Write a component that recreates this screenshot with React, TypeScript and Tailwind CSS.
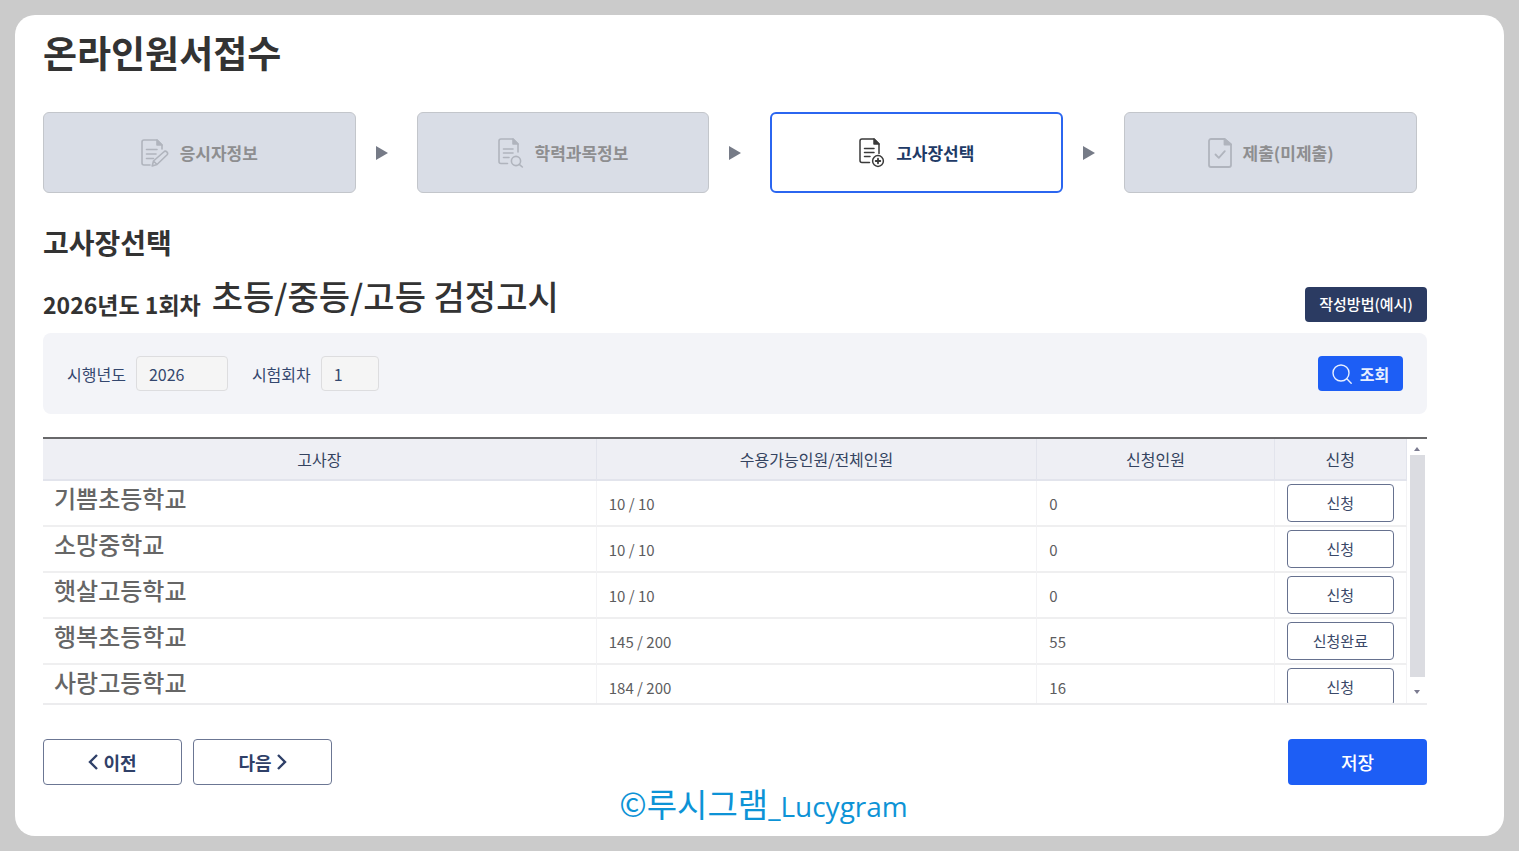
import React, { useState } from 'react';

type IconProps = { className?: string };

const DocEditIcon = ({ className }: IconProps) => (
    <svg viewBox="0 0 28 28" fill="none" stroke="currentColor" strokeWidth="1.600" strokeLinecap="round" strokeLinejoin="round" className={className} aria-hidden="true">
        <path d="M9 26H3a2 2 0 0 1-2-2V3a2 2 0 0 1 2-2h13l5 5v4"/>
        <path d="M16 1v5h5z" fill="currentColor"/>
        <path d="M5.500 10.500h10.500M5.500 15h9.500M5.500 19.500h7"/>
        <path d="M11.200 27l1.300-5 10.200-9a2.100 2.100 0 0 1 3.200 3L16 25.500zM12.500 22l3.500 3.500"/>
    </svg>
);

const DocSearchIcon = ({ className }: IconProps) => (
    <svg viewBox="0 0 26 30" fill="none" stroke="currentColor" strokeWidth="1.600" strokeLinecap="round" strokeLinejoin="round" className={className} aria-hidden="true">
        <path d="M9.500 25.500H3a2 2 0 0 1-2-2V3a2 2 0 0 1 2-2h12l5 5v8"/>
        <path d="M15 1v5h5z" fill="currentColor"/>
        <path d="M5.500 11h9.500M5.500 15h9.500M5.500 19.500h5.500"/>
        <circle cx="18" cy="23" r="4.600"/>
        <path d="M21.300 26.300l3 2.700"/>
    </svg>
);

const DocPlusIcon = ({ className }: IconProps) => (
    <svg viewBox="0 0 26 30" fill="none" stroke="currentColor" strokeWidth="1.500" strokeLinecap="round" strokeLinejoin="round" className={className} aria-hidden="true">
        <path d="M10.500 24.500H3a2 2 0 0 1-2-2V3a2 2 0 0 1 2-2h12l5 5v9.500"/>
        <path d="M15 1v5h5z" fill="currentColor"/>
        <path d="M5.500 10.500h9.500M5.500 14.500h9.500M5.500 18.500h5.500"/>
        <circle cx="19" cy="23" r="5.400"/>
        <path d="M16.700 23h4.600M19 20.700v4.600" strokeWidth="1.800"/>
    </svg>
);

const DocCheckIcon = ({ className }: IconProps) => (
    <svg viewBox="0 0 24 30" fill="none" stroke="currentColor" strokeWidth="1.800" strokeLinecap="round" strokeLinejoin="round" className={className} aria-hidden="true">
        <path d="M16.500 1H3a2 2 0 0 0-2 2v24a2 2 0 0 0 2 2h18a2 2 0 0 0 2-2V6.500z"/>
        <path d="M16.500 1v5.500H23z" fill="currentColor"/>
        <path d="M7.500 16.500l3.300 3.300 6-6.600"/>
    </svg>
);

const SearchIcon = ({ className }: IconProps) => (
    <svg viewBox="0 0 20 20" fill="none" stroke="currentColor" strokeWidth="1.400" strokeLinecap="round" className={className} aria-hidden="true">
        <circle cx="9" cy="9" r="8"/>
        <path d="M14.800 14.800l4.400 4.400"/>
    </svg>
);

const PrevIcon = () => (
    <svg viewBox="0 0 10 16" fill="none" stroke="currentColor" strokeWidth="2.400" className="h-4 w-[10px]" aria-hidden="true">
        <path d="M9 1L2 8l7 7"/>
    </svg>
);

const NextIcon = () => (
    <svg viewBox="0 0 10 16" fill="none" stroke="currentColor" strokeWidth="2.400" className="h-4 w-[10px]" aria-hidden="true">
        <path d="M1 1l7 7-7 7"/>
    </svg>
);

const StepArrow = () => (
    <li aria-hidden="true" className="w-[61px] shrink-0 pl-5">
        <svg viewBox="0 0 12 14" className="h-[14px] w-3 fill-[#767b87]">
            <path d="M0 0l12 7-12 7z"/>
        </svg>
    </li>
);

const steps = [
    { label: '응시자정보', Icon: DocEditIcon, iconClass: 'h-7 w-7', width: 'flex-[312]' },
    { label: '학력과목정보', Icon: DocSearchIcon, iconClass: 'h-[30px] w-[26px]', width: 'flex-[292]' },
    { label: '고사장선택', Icon: DocPlusIcon, iconClass: 'h-[30px] w-[26px]', width: 'flex-[292]' },
    { label: '제출(미제출)', Icon: DocCheckIcon, iconClass: 'h-[30px] w-6', width: 'flex-[292]' },
];

const schools = [
    { name: '기쁨초등학교', seats: '10 / 10', applied: 0, done: false },
    { name: '소망중학교', seats: '10 / 10', applied: 0, done: false },
    { name: '햇살고등학교', seats: '10 / 10', applied: 0, done: false },
    { name: '행복초등학교', seats: '145 / 200', applied: 55, done: true },
    { name: '사랑고등학교', seats: '184 / 200', applied: 16, done: false },
];

const Steps = ({ current }: { current: number }) => (
    <ol className="mt-8 mr-[10px] flex items-center">
        {steps.map(({ label, Icon, iconClass, width }, i) => (
            <React.Fragment key={label}>
                {i > 0 && <StepArrow />}
                <li
                    aria-current={i === current ? 'step' : undefined}
                    className={`${width} flex h-[81px] items-center justify-center gap-[11px] rounded-md ${i === current ? 'border-2 border-[#2b66f0] bg-white' : 'border border-[#c3c6cb] bg-[#d9dde6] p-px'}`}
                >
                    <Icon className={`${iconClass} ${i === current ? 'text-[#3a3a3a]' : 'text-[#b0b4bd]'}`}/>
                    <span className={`text-[17px] font-bold ${i === current ? 'text-[#213a66]' : 'text-[#8e8e90]'}`}>{label}</span>
                </li>
            </React.Fragment>
        ))}
    </ol>
);

const SearchBar = () => (
    <form onSubmit={(e) => e.preventDefault()} className="mt-[11px] flex h-[81px] items-center rounded-lg bg-[#f3f4f8] px-6 text-base text-[#34476e]">
        <label htmlFor="year">시행년도</label>
        <input id="year" readOnly defaultValue="2026" className="ml-[10px] h-[35px] w-[92px] rounded border border-[#dddddf] bg-[#f5f5f5] px-3"/>
        <label htmlFor="round" className="ml-6">시험회차</label>
        <input id="round" readOnly defaultValue="1" className="ml-[10px] h-[35px] w-[58px] rounded border border-[#dddddf] bg-[#f5f5f5] px-3"/>
        <button type="submit" className="ml-auto flex h-[35px] w-[85px] items-center justify-center gap-2 rounded bg-[#1d5ef5] font-bold text-[#e8efff]">
            <SearchIcon className="h-5 w-5"/>
            조회
        </button>
    </form>
);

const SchoolTable = () => {
    const [done, setDone] = useState(schools.map((s) => s.done));
    const toggle = (index: number) => setDone(done.map((d, i) => (i === index ? !d : d)));

    return (
        <div className="mt-[23px] flex h-[268px] overflow-hidden border-t-2 border-b-2 border-t-[#68686a] border-b-[#ececee]">
            <table className="flex-1 table-fixed border-separate border-spacing-0 text-[15px]">
                <colgroup>
                    <col className="w-[40.6%]"/>
                    <col className="w-[32.3%]"/>
                    <col className="w-[17.4%]"/>
                    <col/>
                </colgroup>
                <thead>
                    <tr className="h-[42px] bg-[#eeeff4] text-base text-[#34435f]">
                        <th className="border-r border-b-2 border-[#e2e4ec] font-normal">고사장</th>
                        <th className="border-r border-b-2 border-[#e2e4ec] font-normal">수용가능인원/전체인원</th>
                        <th className="border-r border-b-2 border-[#e2e4ec] font-normal">신청인원</th>
                        <th className="border-r border-b-2 border-[#e2e4ec] font-normal">신청</th>
                    </tr>
                </thead>
                <tbody className="text-[#5c5c5e]">
                    {schools.map((school, i) => (
                        <tr key={school.name} className="h-[46px]">
                            <td className="border-r border-b-2 border-r-[#f3f3f5] border-b-[#efeff0] pb-[10px] pl-[11px] text-2xl leading-8 font-medium text-[#666]">{school.name}</td>
                            <td className="border-r border-b-2 border-r-[#f3f3f5] border-b-[#efeff0] pt-[2px] pl-3">{school.seats}</td>
                            <td className="border-r border-b-2 border-r-[#f3f3f5] border-b-[#efeff0] pt-[2px] pl-3">{school.applied}</td>
                            <td className="border-r border-b-2 border-r-[#f3f3f5] border-b-[#efeff0] px-3">
                                <button type="button" onClick={() => toggle(i)} className="block h-[38px] w-full rounded border border-[#66718f] bg-white text-[#3a4868]">
                                    {done[i] ? '신청완료' : '신청'}
                                </button>
                            </td>
                        </tr>
                    ))}
                </tbody>
            </table>
            <div aria-hidden="true" className="flex w-5 flex-col items-center">
                <div className="flex h-4 items-center pt-1">
                    <svg viewBox="0 0 6 4" className="h-1 w-[6px] fill-[#7b7b90]"><path d="M0 4l3-4 3 4z"/></svg>
                </div>
                <div className="h-[222px] w-[15px] bg-[#dbdce1]"/>
                <div className="flex flex-1 items-center pt-1">
                    <svg viewBox="0 0 6 4" className="h-1 w-[6px] fill-[#7b7b90]"><path d="M0 0l3 4 3-4z"/></svg>
                </div>
            </div>
        </div>
    );
};

function App() {
    return (
        <div className="flex min-h-screen bg-[#cbcbcb] p-[15px] font-['Noto_Sans_CJK_KR',sans-serif]">
            <div className="flex-1 rounded-[20px] bg-white">
                <main className="pt-[10px] pr-[77px] pl-7 text-[#333]">
                    <h1 className="text-[37px] leading-[55px] font-bold">온라인원서접수</h1>
                    <Steps current={2} />

                    <h2 className="mt-[29px] text-[28px] leading-10 font-bold">고사장선택</h2>
                    <div className="mt-4 flex items-start justify-between">
                        <h3 className="flex gap-[11px]">
                            <span className="mt-3 text-[23px] leading-7 font-bold">2026년도 1회차</span>
                            <span className="text-[34px] leading-9 font-medium">초등/중등/고등 검정고시</span>
                        </h3>
                        <button type="button" className="mt-[9px] h-[35px] w-[122px] rounded bg-[#2b3b62] text-[15px] font-medium text-white">작성방법(예시)</button>
                    </div>

                    <SearchBar />
                    <SchoolTable />

                    <div className="mt-[34px] flex gap-[11px] text-[18px] font-bold text-[#2f4068]">
                        <button type="button" className="flex h-[46px] w-[139px] items-center justify-center gap-[5px] rounded border border-[#6b7693]">
                            <PrevIcon />
                            이전
                        </button>
                        <button type="button" className="flex h-[46px] w-[139px] items-center justify-center gap-[5px] rounded border border-[#6b7693]">
                            다음
                            <NextIcon />
                        </button>
                        <button type="button" className="ml-auto h-[46px] w-[139px] rounded bg-[#1d5ef5] font-medium text-white">저장</button>
                    </div>
                </main>
                <footer className="pl-2 text-center text-[33px] leading-9 text-[#0d93d6]">
                    ©루시그램<span className="font-['Open_Sans',sans-serif] text-[28px]">_Lucygram</span>
                </footer>
            </div>
        </div>
    );
}

export default App;
